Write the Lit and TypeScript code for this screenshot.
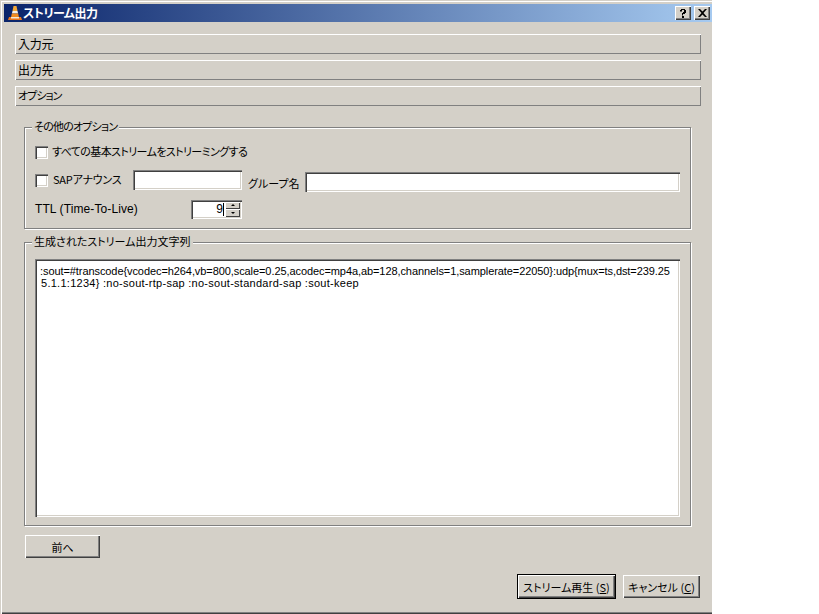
import { LitElement, html, css } from "lit";
import { customElement } from "lit/decorators.js";

@customElement("app-root")
export class AppRoot extends LitElement {
  static styles = css`
    :host { display: block; width: 819px; height: 614px; background: #fff; font-family: "Liberation Sans", "Noto Sans CJK JP", sans-serif; font-size: 12px; color: #000; overflow: hidden; }
    * { box-sizing: border-box; }
    .win { width: 712px; height: 614px; background: #d4d0c8; display: flex; flex-direction: column; padding: 4px 0 3px 4px; box-shadow: inset 1px 1px 0 #d4d0c8, inset 2px 2px 0 #fff, inset 0 -1px 0 #404040, inset 0 -2px 0 #808080; }
    .title { height: 18px; flex: none; background: linear-gradient(90deg, #0a246a, #a6caf0); color: #fff; display: flex; align-items: center; padding-left: 4px; gap: 1px; line-height: 18px; }
    .title svg { flex: none; }
    .title .t { flex: 1; font-size: 12px; font-weight: 700; letter-spacing: -0.5px; font-family: "Noto Sans CJK JP", sans-serif; font-feature-settings: "palt"; }
    .cap { width: 16px; height: 14px; background: #d4d0c8; margin-right: 2px; display: flex; align-items: center; justify-content: center; box-shadow: inset 1px 1px 0 #fff, inset -1px -1px 0 #404040, inset -2px -2px 0 #808080; }
    .body { flex: 1; display: flex; flex-direction: column; padding: 12px 11px 0 11px; min-height: 0; }
    .bar { height: 20px; margin-bottom: 6px; padding-left: 3px; line-height: 19px; font-size: 12px; letter-spacing: -0.3px; font-family: "Noto Sans CJK JP", sans-serif; font-feature-settings: "palt"; box-shadow: inset 1px 1px 0 #fff, inset -1px -1px 0 #808080; flex: none; }
    .tight { font-size: 11px; letter-spacing: -1px; }
    .group { position: relative; margin: 0 10px 0 9px; flex: none; border: 1px solid #808080; box-shadow: inset 1px 1px 0 #fff, 1px 1px 0 #fff; }
    .g1 { height: 102px; margin-top: 15px; padding: 17px 10px 0 10px; }
    .g2 { height: 284px; margin-top: 13px; padding: 16px 10px 0 10px; }
    .legend { position: absolute; left: 7px; top: -10px; background: #d4d0c8; padding: 0 2px; font-size: 11px; line-height: 17px; white-space: nowrap; font-family: "Noto Sans CJK JP", sans-serif; font-feature-settings: "palt"; }
    .row { display: flex; align-items: center; }
    .r1 { height: 14px; }
    .r2 { height: 21px; margin-top: 12px; }
    .r2 > .cb { margin-top: -3px; }
    .r3 { height: 21px; margin-top: 7px; }
    .cb { width: 13px; height: 13px; background: #fff; flex: none; margin-right: 5px; box-shadow: inset 1px 1px 0 #808080, inset 2px 2px 0 #404040, inset -1px -1px 0 #fff, inset -2px -2px 0 #d4d0c8; }
    .lbl { white-space: nowrap; font-size: 11px; font-family: "Noto Sans CJK JP", sans-serif; font-feature-settings: "palt"; line-height: 14px; }
    .all { letter-spacing: -0.6px; margin-top: -3px; margin-left: -1px; }
    .leg1 { letter-spacing: -0.8px; }
    .sap { width: 80px; letter-spacing: -0.2px; margin-top: -5px; }
    .in { height: 20px; background: #fff; flex: none; box-shadow: inset 1px 1px 0 #808080, inset 2px 2px 0 #404040, inset -1px -1px 0 #fff, inset -2px -2px 0 #d4d0c8; }
    .i1 { width: 109px; margin-top: -3px; }
    .gn { margin: 3px 5px 0 6px; width: 52px; }
    .i2 { width: 375px; margin-top: 1px; }
    .ttl { width: 156px; letter-spacing: 0.1px; margin-top: -2px; }
    .spin { width: 51px; height: 19px; margin-top: -1px; background: #fff; display: flex; justify-content: flex-end; padding: 2px; box-shadow: inset 1px 1px 0 #808080, inset 2px 2px 0 #404040, inset -1px -1px 0 #fff, inset -2px -2px 0 #d4d0c8; }
    .val { flex: 1; text-align: right; border-right: 1px solid #000; margin: 1px 1px 1px 0; height: 13px; line-height: 13px; font-size: 12px; }
    .arrows { width: 15px; display: flex; flex-direction: column; }
    .arr { flex: 1; background: #d4d0c8; display: flex; align-items: center; justify-content: center; box-shadow: inset 1px 1px 0 #fff, inset -1px -1px 0 #404040; }
    .tri { width: 0; height: 0; border-left: 2.5px solid transparent; border-right: 2.5px solid transparent; }
    .up { border-bottom: 2px solid #000; }
    .dn { border-top: 2px solid #000; }
    .ta { height: 258px; background: #fff; padding: 6px 5px 0 5px; font-size: 11px; line-height: 12px; white-space: nowrap; box-shadow: inset 1px 1px 0 #808080, inset 2px 2px 0 #404040, inset -1px -1px 0 #fff, inset -2px -2px 0 #d4d0c8; }
    .l1 { letter-spacing: -0.08px; display: block; }
    .l2 { letter-spacing: 0.27px; display: block; padding-left: 1px; }
    .btn { height: 23px; display: flex; align-items: center; justify-content: center; white-space: pre; font-family: "Noto Sans CJK JP", sans-serif; font-feature-settings: "palt"; font-size: 11px; box-shadow: inset 1px 1px 0 #fff, inset -1px -1px 0 #404040, inset -2px -2px 0 #808080; }
    .back { width: 75px; margin: 9px 0 0 10px; flex: none; }
    .foot { display: flex; justify-content: flex-end; gap: 7px; margin-top: 16px; padding-right: 1px; align-items: center; }
    .play { width: 99px; height: 25px; box-shadow: inset 1px 1px 0 #000, inset -1px -1px 0 #000, inset 2px 2px 0 #fff, inset -2px -2px 0 #404040, inset -3px -3px 0 #808080; }
    .cancel { width: 77px; }
    u { text-underline-offset: 1px; }
  `;

  render() {
    return html`<div class="win">
      <div class="title">
        <svg width="14" height="16" viewBox="0 0 14 16">
          <path d="M5.5 1h3l1 5h-5z" fill="#f3a93a"/>
          <path d="M4.5 6h5l.6 2.5H3.9z" fill="#f4f0e8"/>
          <path d="M3.8 8.5h6.4l.7 3.5H3.1z" fill="#f08a1e"/>
          <path d="M1 12h12l1 3H0z" fill="#e8751a"/>
          <path d="M3 12h8v1.5H3z" fill="#f5e9d5"/>
        </svg>
        <span class="t">ストリーム出力</span>
        <div class="cap"><svg width="8" height="9" viewBox="0 0 8 9"><path d="M1 2.5V1h1V0h4v1h1v3H6v1H4v1.5H3V4h1V3h1V1H3v1.5z M3 7h2v2H3z" fill="#000"/></svg></div>
        <div class="cap"><svg width="9" height="8" viewBox="0 0 9 8"><path d="M0 0h2l2.5 2.5L7 0h2L5.5 4 9 8H7L4.5 5.5 2 8H0l3.5-4z" fill="#000"/></svg></div>
      </div>
      <div class="body">
        <div class="bar">入力元</div>
        <div class="bar">出力先</div>
        <div class="bar tight">オプション</div>
        <div class="group g1">
          <div class="legend leg1">その他のオプション</div>
          <div class="row r1"><div class="cb"></div><span class="lbl all">すべての基本ストリームをストリーミングする</span></div>
          <div class="row r2">
            <div class="cb"></div><span class="lbl sap">SAPアナウンス</span>
            <div class="in i1"></div>
            <span class="lbl gn">グループ名</span>
            <div class="in i2"></div>
          </div>
          <div class="row r3">
            <span class="ttl">TTL (Time-To-Live)</span>
            <div class="spin"><div class="val">9</div><div class="arrows"><div class="arr"><div class="tri up"></div></div><div class="arr"><div class="tri dn"></div></div></div></div>
          </div>
        </div>
        <div class="group g2">
          <div class="legend">生成されたストリーム出力文字列</div>
          <div class="ta"><span class="l1">:sout=#transcode{vcodec=h264,vb=800,scale=0.25,acodec=mp4a,ab=128,channels=1,samplerate=22050}:udp{mux=ts,dst=239.25</span><span class="l2">5.1.1:1234} :no-sout-rtp-sap :no-sout-standard-sap :sout-keep</span></div>
        </div>
        <div class="btn back">前へ</div>
        <div class="foot">
          <div class="btn play">ストリーム再生 (<u>S</u>)</div>
          <div class="btn cancel">キャンセル (<u>C</u>)</div>
        </div>
      </div>
    </div>`;
  }
}
